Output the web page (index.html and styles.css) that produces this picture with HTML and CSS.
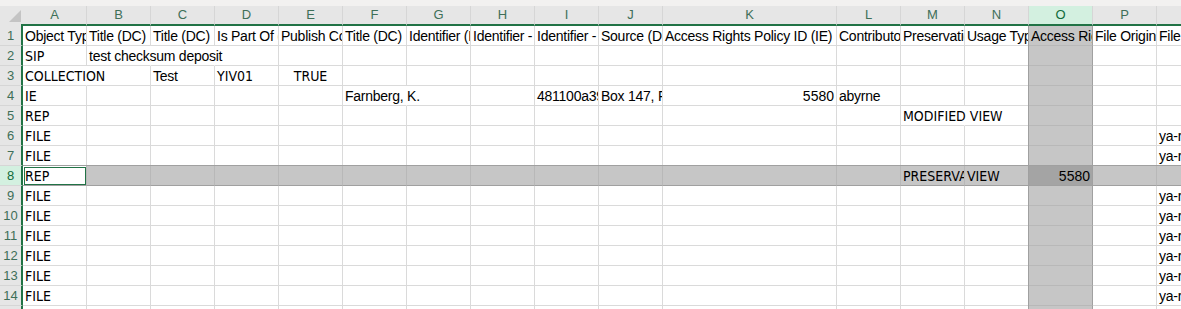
FILE: index.html
```html
<!DOCTYPE html>
<html lang="en">
<head>
<meta charset="UTF-8">
<title>Deposit sheet</title>
<link rel="stylesheet" href="styles.css">
</head>
<body>

<div class="topbar"></div>

<div class="sheet">
    <!-- column letters -->
    <div class="row head">
        <div class="corner"><svg width="12" height="12" viewBox="0 0 12 12"><polygon points="12,0 12,12 0,12" fill="#c4c4c4"/></svg></div>
        <div class="col">A</div>
        <div class="col">B</div>
        <div class="col">C</div>
        <div class="col">D</div>
        <div class="col">E</div>
        <div class="col">F</div>
        <div class="col">G</div>
        <div class="col">H</div>
        <div class="col">I</div>
        <div class="col">J</div>
        <div class="col">K</div>
        <div class="col">L</div>
        <div class="col">M</div>
        <div class="col">N</div>
        <div class="col picked">O</div>
        <div class="col">P</div>
        <div class="col">Q</div>
    </div>

    <div class="row">
        <div class="rh">1</div>
        <div class="c">Object Type</div>
        <div class="c">Title (DC)</div>
        <div class="c">Title (DC)</div>
        <div class="c">Is Part Of (DCTERMS)</div>
        <div class="c">Publish Collection</div>
        <div class="c">Title (DC)</div>
        <div class="c">Identifier (DC)</div>
        <div class="c">Identifier - Barcode</div>
        <div class="c">Identifier - Call No</div>
        <div class="c">Source (DC)</div>
        <div class="c">Access Rights Policy ID (IE)</div>
        <div class="c">Contributor (DC)</div>
        <div class="c">Preservation Type</div>
        <div class="c">Usage Type</div>
        <div class="c o">Access Rights Policy ID (REP)</div>
        <div class="c">File Original Path</div>
        <div class="c">File Label</div>
    </div>

    <div class="row">
        <div class="rh">2</div>
        <div class="c caps">SIP</div>
        <div class="c spill">test checksum deposit</div>
        <div class="c spill"></div>
        <div class="c"></div>
        <div class="c"></div>
        <div class="c"></div>
        <div class="c"></div>
        <div class="c"></div>
        <div class="c"></div>
        <div class="c"></div>
        <div class="c"></div>
        <div class="c"></div>
        <div class="c"></div>
        <div class="c"></div>
        <div class="c o"></div>
        <div class="c"></div>
        <div class="c"></div>
    </div>

    <div class="row">
        <div class="rh">3</div>
        <div class="c caps spill">COLLECTION</div>
        <div class="c"></div>
        <div class="c">Test</div>
        <div class="c caps">YIV01</div>
        <div class="c caps mid">TRUE</div>
        <div class="c"></div>
        <div class="c"></div>
        <div class="c"></div>
        <div class="c"></div>
        <div class="c"></div>
        <div class="c"></div>
        <div class="c"></div>
        <div class="c"></div>
        <div class="c"></div>
        <div class="c o"></div>
        <div class="c"></div>
        <div class="c"></div>
    </div>

    <div class="row">
        <div class="rh">4</div>
        <div class="c caps">IE</div>
        <div class="c"></div>
        <div class="c"></div>
        <div class="c"></div>
        <div class="c"></div>
        <div class="c spill">Farnberg, K.</div>
        <div class="c"></div>
        <div class="c"></div>
        <div class="c">481100a39c7e</div>
        <div class="c">Box 147, Folder 2</div>
        <div class="c num">5580</div>
        <div class="c">abyrne</div>
        <div class="c"></div>
        <div class="c"></div>
        <div class="c o"></div>
        <div class="c"></div>
        <div class="c"></div>
    </div>

    <div class="row">
        <div class="rh">5</div>
        <div class="c caps">REP</div>
        <div class="c"></div>
        <div class="c"></div>
        <div class="c"></div>
        <div class="c"></div>
        <div class="c"></div>
        <div class="c"></div>
        <div class="c"></div>
        <div class="c"></div>
        <div class="c"></div>
        <div class="c"></div>
        <div class="c"></div>
        <div class="c caps spill">MODIFIED VIEW</div>
        <div class="c"></div>
        <div class="c o"></div>
        <div class="c"></div>
        <div class="c"></div>
    </div>

    <div class="row">
        <div class="rh">6</div>
        <div class="c caps">FILE</div>
        <div class="c"></div>
        <div class="c"></div>
        <div class="c"></div>
        <div class="c"></div>
        <div class="c"></div>
        <div class="c"></div>
        <div class="c"></div>
        <div class="c"></div>
        <div class="c"></div>
        <div class="c"></div>
        <div class="c"></div>
        <div class="c"></div>
        <div class="c"></div>
        <div class="c o"></div>
        <div class="c"></div>
        <div class="c">ya-rec-0001.tif</div>
    </div>

    <div class="row">
        <div class="rh">7</div>
        <div class="c caps">FILE</div>
        <div class="c"></div>
        <div class="c"></div>
        <div class="c"></div>
        <div class="c"></div>
        <div class="c"></div>
        <div class="c"></div>
        <div class="c"></div>
        <div class="c"></div>
        <div class="c"></div>
        <div class="c"></div>
        <div class="c"></div>
        <div class="c"></div>
        <div class="c"></div>
        <div class="c o"></div>
        <div class="c"></div>
        <div class="c">ya-rec-0002.tif</div>
    </div>

    <!-- selected row -->
    <div class="row picked-row">
        <div class="rh">8</div>
        <div class="c caps active">REP</div>
        <div class="c"></div>
        <div class="c"></div>
        <div class="c"></div>
        <div class="c"></div>
        <div class="c"></div>
        <div class="c"></div>
        <div class="c"></div>
        <div class="c"></div>
        <div class="c"></div>
        <div class="c"></div>
        <div class="c"></div>
        <div class="c caps">PRESERVATION</div>
        <div class="c caps">VIEW</div>
        <div class="c o num">5580</div>
        <div class="c"></div>
        <div class="c"></div>
    </div>

    <div class="row">
        <div class="rh">9</div>
        <div class="c caps">FILE</div>
        <div class="c"></div>
        <div class="c"></div>
        <div class="c"></div>
        <div class="c"></div>
        <div class="c"></div>
        <div class="c"></div>
        <div class="c"></div>
        <div class="c"></div>
        <div class="c"></div>
        <div class="c"></div>
        <div class="c"></div>
        <div class="c"></div>
        <div class="c"></div>
        <div class="c o"></div>
        <div class="c"></div>
        <div class="c">ya-rec-0003.tif</div>
    </div>

    <div class="row">
        <div class="rh">10</div>
        <div class="c caps">FILE</div>
        <div class="c"></div>
        <div class="c"></div>
        <div class="c"></div>
        <div class="c"></div>
        <div class="c"></div>
        <div class="c"></div>
        <div class="c"></div>
        <div class="c"></div>
        <div class="c"></div>
        <div class="c"></div>
        <div class="c"></div>
        <div class="c"></div>
        <div class="c"></div>
        <div class="c o"></div>
        <div class="c"></div>
        <div class="c">ya-rec-0004.tif</div>
    </div>

    <div class="row">
        <div class="rh">11</div>
        <div class="c caps">FILE</div>
        <div class="c"></div>
        <div class="c"></div>
        <div class="c"></div>
        <div class="c"></div>
        <div class="c"></div>
        <div class="c"></div>
        <div class="c"></div>
        <div class="c"></div>
        <div class="c"></div>
        <div class="c"></div>
        <div class="c"></div>
        <div class="c"></div>
        <div class="c"></div>
        <div class="c o"></div>
        <div class="c"></div>
        <div class="c">ya-rec-0005.tif</div>
    </div>

    <div class="row">
        <div class="rh">12</div>
        <div class="c caps">FILE</div>
        <div class="c"></div>
        <div class="c"></div>
        <div class="c"></div>
        <div class="c"></div>
        <div class="c"></div>
        <div class="c"></div>
        <div class="c"></div>
        <div class="c"></div>
        <div class="c"></div>
        <div class="c"></div>
        <div class="c"></div>
        <div class="c"></div>
        <div class="c"></div>
        <div class="c o"></div>
        <div class="c"></div>
        <div class="c">ya-rec-0006.tif</div>
    </div>

    <div class="row">
        <div class="rh">13</div>
        <div class="c caps">FILE</div>
        <div class="c"></div>
        <div class="c"></div>
        <div class="c"></div>
        <div class="c"></div>
        <div class="c"></div>
        <div class="c"></div>
        <div class="c"></div>
        <div class="c"></div>
        <div class="c"></div>
        <div class="c"></div>
        <div class="c"></div>
        <div class="c"></div>
        <div class="c"></div>
        <div class="c o"></div>
        <div class="c"></div>
        <div class="c">ya-rec-0007.tif</div>
    </div>

    <div class="row">
        <div class="rh">14</div>
        <div class="c caps">FILE</div>
        <div class="c"></div>
        <div class="c"></div>
        <div class="c"></div>
        <div class="c"></div>
        <div class="c"></div>
        <div class="c"></div>
        <div class="c"></div>
        <div class="c"></div>
        <div class="c"></div>
        <div class="c"></div>
        <div class="c"></div>
        <div class="c"></div>
        <div class="c"></div>
        <div class="c o"></div>
        <div class="c"></div>
        <div class="c">ya-rec-0008.tif</div>
    </div>

    <div class="row">
        <div class="rh">15</div>
        <div class="c"></div>
        <div class="c"></div>
        <div class="c"></div>
        <div class="c"></div>
        <div class="c"></div>
        <div class="c"></div>
        <div class="c"></div>
        <div class="c"></div>
        <div class="c"></div>
        <div class="c"></div>
        <div class="c"></div>
        <div class="c"></div>
        <div class="c"></div>
        <div class="c"></div>
        <div class="c o"></div>
        <div class="c"></div>
        <div class="c"></div>
    </div>
</div>

</body>
</html>
```

FILE: styles.css
```css
html, body {
    margin: 0;
    padding: 0;
    overflow: hidden;
    background-color: #fff;
}
body {
    font-family: "Liberation Sans", Arial, sans-serif;
    font-size: 14px;
    color: #000;
}
.topbar {
    height: 6px;
    background-color: #f2f1f0;
}
.row {
    display: grid;
    grid-template-columns: 23px repeat(10, 64px) 174px repeat(6, 64px);
    height: 20px;
}

/* headers */
.corner {
    box-sizing: border-box;
    display: flex;
    justify-content: flex-end;
    align-items: flex-end;
    padding: 0 2px 4px 0;
    background: linear-gradient(#217346, #217346) right bottom / 2px 2px no-repeat, #e6e6e6;
}
.corner svg {
    display: block;
}
.col {
    box-sizing: border-box;
    height: 20px;
    background-color: #e6e6e6;
    border-right: 1px solid #d6d6d6;
    border-bottom: 2px solid #217346;
    text-align: center;
    font-size: 13px;
    line-height: 18px;
    color: #3e6f58;
}
.col.picked {
    background-color: #d3f0e0;
    color: #0f6b3a;
}
.rh {
    box-sizing: border-box;
    height: 20px;
    background-color: #e6e6e6;
    border-right: 2px solid #217346;
    border-bottom: 1px solid #d6d6d6;
    text-align: center;
    font-size: 13px;
    line-height: 19px;
    color: #3e6f58;
}

/* cells */
.c {
    box-sizing: border-box;
    height: 20px;
    padding: 2px 2px 0 2px;
    line-height: 17px;
    letter-spacing: -0.25px;
    border-right: 1px solid #dadada;
    border-bottom: 1px solid #dadada;
    white-space: nowrap;
    overflow: hidden;
}
.caps {
    font-family: "Liberation Sans Narrow", "DejaVu Sans Condensed", "Liberation Sans", sans-serif;
    letter-spacing: 0;
}
.spill {
    overflow: visible;
    border-right-color: transparent;
}
.num {
    text-align: right;
    letter-spacing: 0;
}
.mid {
    text-align: center;
}

/* selection: column O and row 8 */
.c.o {
    background-color: #c6c6c6;
    border-right-color: #a0a0a0;
    border-bottom-color: #b8b8b8;
    box-shadow: -1px 0 0 #a0a0a0;
}
.picked-row .c {
    background-color: #c6c6c6;
    border-right-color: #b8b8b8;
    border-bottom-color: #a0a0a0;
    box-shadow: 0 -1px 0 #a0a0a0;
}
.picked-row .c.o {
    background-color: #a4a4a4;
    border-right-color: #a0a0a0;
    box-shadow: 0 -1px 0 #a0a0a0, -1px 0 0 #a0a0a0;
}
.picked-row .rh {
    background-color: #d3f0e0;
    color: #0f6b3a;
}
.picked-row .c.active {
    background-color: #fff;
    outline: 1px solid #217346;
    outline-offset: -2px;
}
```
